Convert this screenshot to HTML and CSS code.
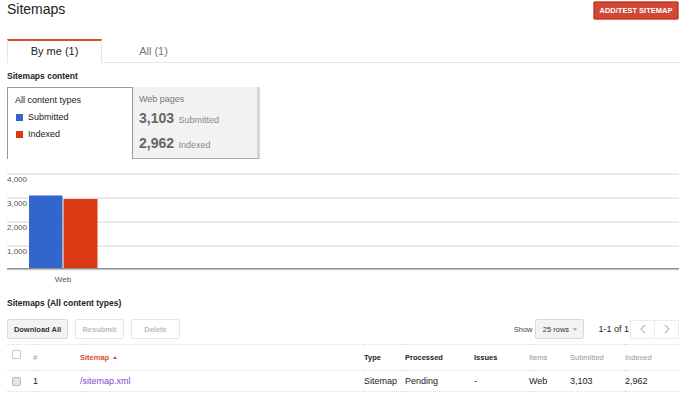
FILE: index.html
```html
<!DOCTYPE html>
<html lang="en">

<head>
    <meta charset="UTF-8">
    <meta name="viewport" content="width=device-width, initial-scale=1.0">
    <title>Sitemaps</title>
    <link rel="stylesheet" href="styles.css">
</head>

<body>
    <div class="page">
        <div class="header">
            <h1 class="title">Sitemaps</h1>
            <button class="add-btn">ADD/TEST SITEMAP</button>
        </div>

        <div class="tabs">
            <div class="tab active">By me (1)</div>
            <div class="tab">All (1)</div>
        </div>

        <h2 class="section-title">Sitemaps content</h2>
        <div class="summary">
            <div class="legend">
                <div>All content types</div>
                <div><span class="swatch blue"></span>Submitted</div>
                <div><span class="swatch red"></span>Indexed</div>
            </div>
            <div class="webbox">
                <div class="web-title">Web pages</div>
                <div class="stat"><b>3,103</b> Submitted</div>
                <div class="stat"><b>2,962</b> Indexed</div>
            </div>
        </div>

        <svg class="chart" width="672" height="129" viewBox="0 0 672 129">
            <g fill="#e4e4e4">
                <rect x="0" y="14.5" width="672" height="1.5" />
                <rect x="0" y="38.5" width="672" height="1.5" />
                <rect x="0" y="62.5" width="672" height="1.5" />
                <rect x="0" y="86.5" width="672" height="1.5" />
            </g>
            <g font-family="Liberation Sans, Arial, sans-serif" font-size="8" fill="#555">
                <text x="0" y="23">4,000</text>
                <text x="0" y="47">3,000</text>
                <text x="0" y="71">2,000</text>
                <text x="0" y="95">1,000</text>
                <text x="56" y="123" text-anchor="middle">Web</text>
            </g>
            <rect x="22" y="36.5" width="33.5" height="73" fill="#3366cc" />
            <rect x="56.5" y="40" width="34" height="69.5" fill="#dc3912" />
            <rect x="0" y="109" width="672" height="1.5" fill="#8a8a8a" />
            <rect x="0" y="110.5" width="672" height="0.8" fill="#d0d0d0" />
        </svg>

        <h2 class="section-title list-title">Sitemaps (All content types)</h2>
        <div class="toolbar">
            <div class="actions">
                <button class="btn">Download All</button>
                <button class="btn disabled">Resubmit</button>
                <button class="btn disabled">Delete</button>
            </div>
            <div class="paging">
                <span class="show">Show</span>
                <span class="rows">25 rows <span class="caret"></span></span>
                <span class="range">1-1 of 1</span>
                <span class="nav">
                    <button class="nav-btn"><svg width="8" height="10" viewBox="0 0 8 10"><polyline points="6,1 2,5 6,9" fill="none" stroke="#bdbdbd" stroke-width="1.2" /></svg></button>
                    <button class="nav-btn"><svg width="8" height="10" viewBox="0 0 8 10"><polyline points="2,1 6,5 2,9" fill="none" stroke="#bdbdbd" stroke-width="1.2" /></svg></button>
                </span>
            </div>
        </div>

        <table class="sitemaps">
            <colgroup>
                <col style="width: 26px">
                <col style="width: 47px">
                <col style="width: 284px">
                <col style="width: 41px">
                <col style="width: 69px">
                <col style="width: 55px">
                <col style="width: 41px">
                <col style="width: 55px">
                <col style="width: 54px">
            </colgroup>
            <thead>
                <tr>
                    <th class="check"><span class="box"></span></th>
                    <th class="muted">#</th>
                    <th class="sorted">Sitemap <span class="up"></span></th>
                    <th>Type</th>
                    <th>Processed</th>
                    <th>Issues</th>
                    <th class="muted">Items</th>
                    <th class="muted">Submitted</th>
                    <th class="muted">Indexed</th>
                </tr>
            </thead>
            <tbody>
                <tr>
                    <td class="check"><span class="box filled"></span></td>
                    <td>1</td>
                    <td><a href="#">/sitemap.xml</a></td>
                    <td>Sitemap</td>
                    <td>Pending</td>
                    <td>-</td>
                    <td>Web</td>
                    <td>3,103</td>
                    <td>2,962</td>
                </tr>
            </tbody>
        </table>
    </div>
</body>

</html>
```

FILE: styles.css
```css
* {
    box-sizing: border-box;
}

body {
    margin: 0;
    background: #fff;
    font-family: "Liberation Sans", Arial, sans-serif;
    color: #222;
}

.page {
    width: 672px;
    margin-left: 7px;
}

.header {
    display: flex;
    justify-content: space-between;
    align-items: flex-start;
    height: 21px;
}

.title {
    margin: 0;
    font-size: 14px;
    font-weight: normal;
    line-height: 18px;
    color: #222;
}

.add-btn {
    margin-top: 1px;
    width: 86px;
    height: 19px;
    padding: 0;
    appearance: none;
    background: #d14836;
    border: 1px solid #e0705f;
    box-shadow: inset 0 0 0 1px #c53727;
    border-radius: 2px;
    color: #fff;
    font-family: inherit;
    font-size: 7.5px;
    font-weight: bold;
}

.tabs {
    display: flex;
    margin-top: 18px;
    border-bottom: 1px solid #e5e5e5;
}

.tab {
    width: 95px;
    height: 23px;
    line-height: 21px;
    font-size: 11px;
    text-align: center;
    color: #777;
    border-top: 2px solid transparent;
}

.tab.active {
    height: 24px;
    margin-bottom: -1px;
    background: #fff;
    color: #222;
    border-top: 2px solid #dd4b39;
    border-left: 1px solid #e5e5e5;
    border-right: 1px solid #e5e5e5;
}

.tab + .tab {
    width: 103px;
}

.section-title {
    margin: 7px 0 5px;
    font-size: 8.5px;
    font-weight: bold;
    line-height: 12px;
    color: #222;
}

.summary {
    display: flex;
    height: 72px;
}

.legend {
    width: 126px;
    padding: 4px 7px 0;
    border: 1px solid #999;
    border-bottom: none;
    font-size: 9px;
    line-height: 17px;
}

.swatch {
    display: inline-block;
    width: 7px;
    height: 7px;
    margin: 0 5px 0 1px;
    vertical-align: -0.5px;
}

.swatch.blue {
    background: #3366cc;
}

.swatch.red {
    background: #dc3912;
}

.webbox {
    width: 127px;
    padding: 4px 6px 0;
    background: #f2f2f2;
    border-bottom: 1px solid #aaa;
    border-right: 3px solid #d6d6d6;
    font-size: 9px;
    color: #888;
}

.web-title {
    line-height: 16px;
    color: #777;
}

.stat {
    line-height: 23px;
}

.stat b {
    font-size: 14px;
    color: #666;
    margin-right: 2px;
}

.chart {
    display: block;
}

.list-title {
    margin: 9px 0 10px;
}

.toolbar {
    display: flex;
    justify-content: space-between;
    align-items: center;
    height: 20px;
    margin-bottom: 5px;
}

.actions {
    display: flex;
    gap: 7px;
}

.btn {
    width: 49px;
    height: 20px;
    padding: 0;
    appearance: none;
    background: #fff;
    border: 1px solid #e6e6e6;
    border-radius: 2px;
    font-family: inherit;
    font-size: 7.5px;
    font-weight: bold;
    color: #bbb;
}

.btn:first-child {
    width: 61px;
    background: #f3f3f3;
    border-color: #d9d9d9;
    color: #333;
}

.paging {
    display: flex;
    align-items: center;
    font-size: 7.5px;
}

.show {
    color: #444;
    margin-right: 3px;
}

.rows {
    display: flex;
    align-items: center;
    justify-content: center;
    gap: 4px;
    width: 49px;
    height: 20px;
    background: #f3f3f3;
    border: 1px solid #d9d9d9;
    border-radius: 2px;
    color: #333;
    font-size: 7.5px;
}

.caret {
    width: 0;
    height: 0;
    border-left: 2.5px solid transparent;
    border-right: 2.5px solid transparent;
    border-top: 3px solid #aaa;
}

.range {
    margin-left: 14px;
    font-size: 9px;
    color: #222;
}

.nav {
    display: flex;
    margin-left: 1px;
}

.nav-btn {
    width: 25px;
    height: 19px;
    padding: 0;
    appearance: none;
    background: #fff;
    border: 1px solid #ececec;
    display: flex;
    align-items: center;
    justify-content: center;
}

.nav-btn + .nav-btn {
    margin-left: -1px;
}

.sitemaps {
    width: 672px;
    table-layout: fixed;
    border-collapse: collapse;
}

.sitemaps th,
.sitemaps td {
    padding: 0;
    text-align: left;
    white-space: nowrap;
}

.sitemaps th {
    height: 26px;
    border-top: 1px dotted #ddd;
    font-size: 7.5px;
    font-weight: bold;
    color: #222;
}

.sitemaps th.muted {
    font-weight: normal;
    color: #999;
}

.sitemaps th.sorted {
    color: #dd4b39;
}

.up {
    display: inline-block;
    margin-left: 2px;
    width: 0;
    height: 0;
    border-left: 2.5px solid transparent;
    border-right: 2.5px solid transparent;
    border-bottom: 3px solid #dd4b39;
    vertical-align: 1px;
}

.sitemaps td {
    height: 21px;
    border-top: 1px dotted #ddd;
    border-bottom: 1px dotted #ddd;
    font-size: 9px;
    color: #222;
}

.sitemaps a {
    color: #7b4cce;
    text-decoration: none;
}

.sitemaps .check {
    padding-left: 5px;
}

.box {
    display: inline-block;
    width: 9px;
    height: 9px;
    border: 1px solid #c6c6c6;
    border-radius: 1px;
    background: #fff;
    vertical-align: middle;
}

th .box {
    margin-bottom: 6px;
}

.box.filled {
    background: #e4e4e4;
    border-color: #b8b8b8;
    border-radius: 2px;
}
```
